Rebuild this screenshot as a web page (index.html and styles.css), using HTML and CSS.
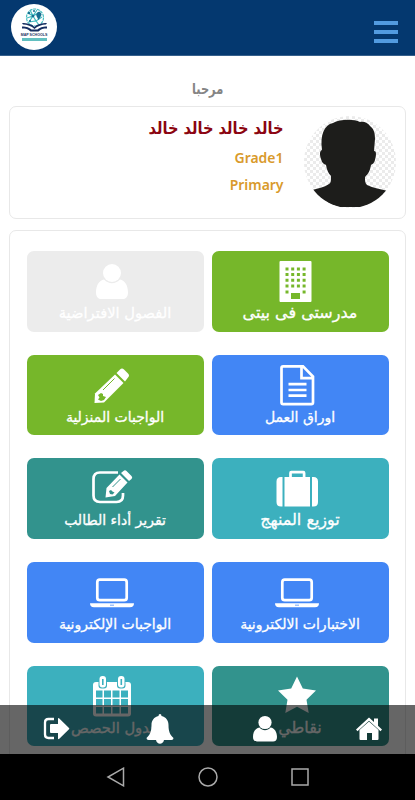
FILE: index.html
```html
<!DOCTYPE html>
<html lang="ar" dir="rtl">
<head>
  <meta charset="UTF-8">
  <meta name="viewport" content="width=device-width, initial-scale=1">
  <title>Map Schools</title>
  <link rel="stylesheet" href="styles.css">
</head>
<body>

  <header class="topbar">
    <button class="menu-btn" title="القائمة"><span></span><span></span><span></span></button>
    <div class="logo">
      <svg class="logo-art" viewBox="0 0 30 24">
        <g fill="none" stroke="#45bcc0" stroke-width="1.2">
          <circle cx="16" cy="9.500" r="8.500" stroke-dasharray="3 .8"/>
          <path d="M9 5l5 3 4-6M8 10l6-2 3 5 6-4M11 2l3 6-4 6M14 8l7-4M10 14l7-1 3 4"/>
        </g>
        <g fill="#176e91">
          <circle cx="10" cy="5" r="1.200"/><circle cx="14" cy="8" r="1.300"/><circle cx="11" cy="13" r="1.100"/><circle cx="15" cy="3" r="1"/>
          <path d="M18 5a2.500 2.500 0 0 1 4 3l-2.500 4-2-4a2.500 2.500 0 0 1 .5-3z"/>
        </g>
        <path d="M3 15c5 0 10 1 12.500 4 2.500-3 7.500-4 12.500-4l-1 1.500c-4 0-8.500 1.500-11.500 4.500-3-3-7.500-4.500-11.500-4.500z" fill="#152d60"/>
        <path d="M3 18.500c5 0 7 1 9.500 3h6c2.500-2 4.500-3 9.500-3v2c-4 0-6 .5-8.500 3h-8c-2.500-2.500-4.500-3-8.500-3z" fill="#152d60"/>
      </svg>
      <b>MAP SCHOOLS</b>
      <i></i>
    </div>
  </header>

  <main>
    <h1><span>مرحبا</span></h1>

    <section class="profile">
      <svg class="avatar" viewBox="0 0 92 92">
        <defs>
          <pattern id="squares" width="6" height="6" patternUnits="userSpaceOnUse">
            <path fill="#fff" d="M0 0h6v6H0z"/>
            <path fill="#ebebeb" d="M0 0h3v3H0zM3 3h3v3H3z"/>
          </pattern>
          <clipPath id="round"><circle cx="46" cy="46" r="46"/></clipPath>
        </defs>
        <g clip-path="url(#round)">
          <path fill="url(#squares)" d="M0 0h92v92H0z"/>
          <path fill="#1d1d1b" d="M18 34C16 19 20 9 29 7c7-4 21-4 27-1 4-1 8 1 10 4 4 3 5 7 5 13l-1 12c3 0 2 5 1 9-1 4-3 4-4 5-1 6-3 9-6 12 0 4 0 6 2 8 6 3 14 4 21 6C77 84 67 91 57 91H35C25 89 15 82 8 74c7-2 13-3 17-6 2-1 2-4 2-8-3-3-4-6-5-11-2-1-4-2-5-6-1-3-2-8 1-9z"/>
        </g>
      </svg>
      <div class="info">
        <h2>خالد خالد خالد خالد</h2>
        <p>Grade1</p>
        <p>Primary</p>
      </div>
    </section>

    <section class="tiles">
      <a class="tile green">
        <svg viewBox="0 0 48 46"><path fill-rule="evenodd" d="M7.500 4h30q1 0 1 1v39q0 1-1 1h-30q-1 0-1-1V5q0-1 1-1zM18 36v6h9v-6z"/>
          <path class="cut dots" d="M12.500 12h21M12.500 17.500h21M12.500 23.200h21M12.500 29h21"/><path class="cut" d="M12.500 33.500h3v3h-3zM29.600 33.500h3v3h-3z"/></svg>
        <span class="wide">مدرستى فى بيتى</span>
      </a>
      <a class="tile off">
        <svg viewBox="0 0 48 46"><circle cx="24" cy="16" r="9"/><path d="M16 22.500c5 5 11 5 16 0 5 1 8 6 8 13 0 4-2 6.500-5 6.500H13c-3 0-5-2.500-5-6.500 0-7 3-12 8-13z"/></svg>
        <span class="medium">الفصول الافتراضية</span>
      </a>
      <a class="tile blue">
        <svg viewBox="0 0 48 46"><path class="line" d="M9.500 5.300H30L40 15.500v26q0 1.700-1.700 1.700H10.200q-1.700 0-1.700-1.700V7q0-1.700 1.700-1.700zM28.500 5.500v11.700H40"/><path class="line" d="M15.500 23.200h18M15.500 29h18M15.500 34.700h18"/></svg>
        <span>اوراق العمل</span>
      </a>
      <a class="tile green">
        <svg viewBox="0 0 48 46"><path d="M27 13.500L35.500 22 16 41.500 6.500 42 7 32.500z"/><path d="M28.500 12l3.500-3.500q2-2 4 0l4 4q2 2 0 4L37 20.500z"/><path class="cut-line" d="M15 29L26.500 17.500"/><path class="cut" d="M10 34l3-2 2 1v2l3 1-2 3-3 1-3-1.500 1.500-2z"/></svg>
        <span>الواجبات المنزلية</span>
      </a>
      <a class="tile aqua">
        <svg viewBox="0 0 48 46"><path d="M9.500 13v29.500H8q-4.500 0-4.500-4.500V17.500Q3.500 13 8 13zM39 13v29.500h1.500q4.500 0 4.500-4.500V17.500q0-4.500-4.500-4.500zM11.500 13h25.500v29.500H11.500z"/><path class="line" d="M17.500 14V9q0-.8.8-.8h12q.8 0 .8.800v5"/></svg>
        <span class="wide">توزيع المنهج</span>
      </a>
      <a class="tile teal">
        <svg viewBox="0 0 48 46"><path class="line" d="M30 8.500H12Q5.500 8.500 5.500 15v16.500q0 6.500 6.500 6.500h16.500q6.500 0 6.500-6.500V29"/><path d="M31.500 10.500l8 8L27 32l-9.500 1.500 1-9.500zM33 9l2.500-2q1.500-1.500 3 0l5 5q1.500 1.500 0 3l-2.500 2z"/><path class="cut-line" d="M24.500 23l8-8"/><path class="cut" d="M21 27l2-1 1.500 1.500 2 1-2 2-2.500-.5z"/></svg>
        <span>تقرير أداء الطالب</span>
      </a>
      <a class="tile blue">
        <svg viewBox="0 0 48 46"><rect class="line" x="9.300" y="11.700" width="29.400" height="20.500" rx="2.500"/><path fill-rule="evenodd" d="M2 35.300h44q0 4-4 4H6q-4 0-4-4zM22 36.800v.7h4v-.7z"/></svg>
        <span>الاختبارات الالكترونية</span>
      </a>
      <a class="tile blue">
        <svg viewBox="0 0 48 46"><rect class="line" x="9.300" y="11.700" width="29.400" height="20.500" rx="2.500"/><path fill-rule="evenodd" d="M2 35.300h44q0 4-4 4H6q-4 0-4-4zM22 36.800v.7h4v-.7z"/></svg>
        <span>الواجبات الإلكترونية</span>
      </a>
      <a class="tile teal">
        <svg viewBox="0 0 48 46"><path d="M24 4.500l5.800 12 13.200 2-9.500 9.300L35.700 41 24 34.800 12.300 41l2.200-13.200L5 18.500l13.200-2z"/></svg>
        <span class="wide">نقاطي</span>
      </a>
      <a class="tile aqua">
        <svg viewBox="0 0 48 46"><path d="M8 10h32q3 0 3 3v28.500q0 3-3 3H8q-3 0-3-3V13q0-3 3-3z"/><path class="cut" d="M8 18.500h6.500v7H8zM16 18.500h7v7h-7zM24.500 18.500h7v7h-7zM33 18.500h7v7h-7zM8 27h6.500v6.500H8zM16 27h7v6.500h-7zM24.500 27h7v6.500h-7zM33 27h7v6.500h-7zM8 35h6.500v6.500H8zM16 35h7v6.500h-7zM24.500 35h7v6.500h-7zM33 35h7v6.500h-7z"/><rect class="cut" x="10.500" y="8" width="8.500" height="8.500" rx="3"/><rect class="cut" x="29" y="8" width="8.500" height="8.500" rx="3"/><rect x="11.500" y="4" width="6.500" height="11.500" rx="3"/><rect x="30" y="4" width="6.500" height="11.500" rx="3"/><path class="cut" d="M14 7h1.600v6H14zM32.500 7h1.600v6h-1.600z"/></svg>
        <span class="medium">جدول الحصص</span>
      </a>
    </section>
  </main>

  <nav class="bottombar">
    <svg viewBox="0 0 30 30"><path d="M15 7.500l9.500 8.500v9q0 1-1 1H18v-7h-5v7H6.500q-1 0-1-1v-9z"/><path d="M15 3.500l5 4.500V4.500h4v7.300l4 3.700-1.500 1.700L15 6.800 3.500 17.200 2 15.500z"/></svg>
    <svg viewBox="0 0 30 30"><circle cx="15" cy="8.500" r="6.600"/><path d="M9.500 13.500c3 3.500 8 3.500 11 0 4 .5 6.500 4.500 6.500 9.500 0 3-1.500 4.500-4 4.500H7c-2.500 0-4-1.500-4-4.500 0-5 2.500-9 6.500-9.500z"/></svg>
    <svg viewBox="0 0 30 30"><path d="M13.500 2q0-2 1.500-2t1.500 2C21 3 23.500 6.500 23.500 11c0 6 1.500 10 5 13q0 2-2 2H19c-1 5-7 5-8 0H3.500q-2 0-2-2c3.500-3 5-7 5-13 0-4.500 2.500-8 7-9z"/></svg>
    <svg viewBox="0 0 30 30"><path class="line exit" d="M13 5H7.500Q4 5 4 8.500v12Q4 24 7.500 24H13"/><path d="M9 11q0-1 1-1h7V5q0-1.500 1.300-.5l9.700 9.500q.7.700 0 1.300l-9.700 9.500q-1.300 1-1.300-.5v-5.300h-7q-1 0-1-1z"/></svg>
  </nav>

  <footer class="system">
    <svg viewBox="0 0 20 20"><rect x="2" y="2" width="16" height="16"/></svg>
    <svg viewBox="0 0 20 20"><circle cx="10" cy="10" r="9"/></svg>
    <svg viewBox="0 0 20 20"><path d="M17.500 1.200v17.600L2 10z"/></svg>
  </footer>

</body>
</html>
```

FILE: styles.css
```css
* {
  box-sizing: border-box;
}

body {
  margin: 0;
  height: 100vh;
  display: flex;
  flex-direction: column;
  position: relative;
  overflow: hidden;
  background-color: white;
  font-family: "DejaVu Sans", sans-serif;
}

.topbar {
  height: 56px;
  flex: none;
  display: flex;
  justify-content: space-between;
  align-items: flex-start;
  padding: 4px 17px 0 11px;
  background-color: #04386f;
  border-bottom: 1px solid #36608c;
}

.menu-btn {
  width: 24px;
  margin-top: 17px;
  padding: 0;
  border: none;
  background: none;
  display: flex;
  flex-direction: column;
  gap: 5px;
}

.menu-btn span {
  height: 4px;
  background-color: #529be0;
}

.logo {
  width: 46px;
  height: 46px;
  border-radius: 50%;
  background-color: white;
  display: flex;
  flex-direction: column;
  align-items: center;
  padding-top: 4px;
}

.logo-art {
  width: 30px;
  height: 24px;
  flex: none;
}

.logo b {
  direction: ltr;
  color: #24345f;
  font: bold 3.6px/6px "Liberation Sans", sans-serif;
  white-space: nowrap;
}

.logo i {
  width: 25px;
  height: 3px;
  margin-top: 0;
  background-color: #61bfc0;
}

main {
  flex: 1;
  min-height: 0;
  overflow: hidden;
  padding: 0 9px;
}

h1 {
  height: 50px;
  margin: 0;
  padding-top: 16px;
  color: #858585;
  font-size: 15px;
  line-height: 34px;
  text-align: center;
}

h1 span {
  display: inline-block;
  transform: scaleX(0.76);
}

.profile {
  height: 113px;
  display: flex;
  gap: 21px;
  padding: 9px 9px 0;
  border: 1px solid #e8e8e8;
  border-radius: 7px;
}

.avatar {
  width: 92px;
  height: 92px;
}

h2 {
  margin: 0 0 2px;
  color: #8b0610;
  font-size: 16.5px;
  line-height: 26px;
  white-space: nowrap;
  transform: scaleX(0.885);
  transform-origin: right;
}

.info p {
  margin: 0;
  color: #d99a2b;
  font: 600 15px/27px "Noto Sans", sans-serif;
  direction: ltr;
  text-align: right;
  transform: scaleX(0.93);
  transform-origin: right;
}

.tiles {
  display: grid;
  grid-template-columns: 177px 177px;
  grid-auto-rows: 80.7px;
  gap: 23px 8px;
  justify-content: center;
  margin-top: 11px;
  padding: 20px 0;
  border: 1px solid #e8e8e8;
  border-radius: 7px;
}

.tile {
  --tile: #76b72a;
  display: flex;
  flex-direction: column;
  align-items: center;
  padding-top: 6px;
  border-radius: 7px;
  background-color: var(--tile);
  color: white;
}

.blue {
  --tile: #4286f5;
}

.aqua {
  --tile: #3cb0be;
}

.teal {
  --tile: #32938d;
}

.off {
  --tile: #ececec;
}

.tile svg {
  width: 48px;
  height: 46px;
  margin-right: 7px;
  flex: none;
  fill: white;
}

.tile .cut {
  fill: var(--tile);
}

.tile .cut-line {
  fill: none;
  stroke: var(--tile);
  stroke-width: 1;
}

.tile .dots {
  stroke: var(--tile);
  stroke-width: 3;
  stroke-dasharray: 3 2.7;
}

.line {
  fill: none;
  stroke: white;
  stroke-width: 2.7;
}

.tile span {
  font-size: 14px;
  line-height: 20px;
  white-space: nowrap;
  -webkit-text-stroke: 0.3px white;
}

.tile .medium {
  font-size: 14.7px;
}

.tile .wide {
  font-size: 16px;
}

.bottombar {
  position: absolute;
  left: 0;
  right: 0;
  bottom: 46px;
  height: 49px;
  display: flex;
  justify-content: space-between;
  padding: 9px 31px 0 41px;
  background-color: rgba(0, 0, 0, 0.6);
}

.bottombar svg {
  width: 30px;
  height: 30px;
  fill: white;
}

.bottombar .exit {
  fill: none;
  stroke-width: 2.3;
}

.system {
  height: 46px;
  flex: none;
  display: flex;
  justify-content: center;
  gap: 72px;
  padding-top: 13px;
  background-color: black;
}

.system svg {
  width: 20px;
  height: 20px;
  fill: none;
  stroke: #aaa;
  stroke-width: 1.5;
}
```
